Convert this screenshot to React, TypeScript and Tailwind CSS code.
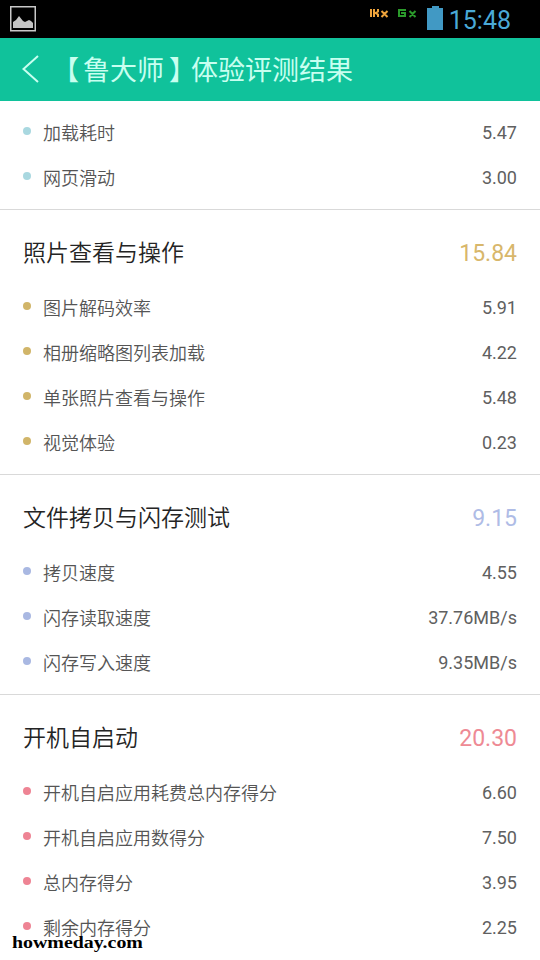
interface Item {
  label: string;
  value: string;
}

interface Section {
  title?: string;
  score?: string;
  dot: string;
  color: string;
  items: Item[];
}

const sections: Section[] = [
  {
    dot: "bg-[#a9d8e0]",
    color: "text-[#a9d8e0]",
    items: [
      { label: "加载耗时", value: "5.47" },
      { label: "网页滑动", value: "3.00" },
    ],
  },
  {
    title: "照片查看与操作",
    score: "15.84",
    dot: "bg-[#d1b569]",
    color: "text-[#d8b76b]",
    items: [
      { label: "图片解码效率", value: "5.91" },
      { label: "相册缩略图列表加载", value: "4.22" },
      { label: "单张照片查看与操作", value: "5.48" },
      { label: "视觉体验", value: "0.23" },
    ],
  },
  {
    title: "文件拷贝与闪存测试",
    score: "9.15",
    dot: "bg-[#a9b8e2]",
    color: "text-[#afbce6]",
    items: [
      { label: "拷贝速度", value: "4.55" },
      { label: "闪存读取速度", value: "37.76MB/s" },
      { label: "闪存写入速度", value: "9.35MB/s" },
    ],
  },
  {
    title: "开机自启动",
    score: "20.30",
    dot: "bg-[#ee8494]",
    color: "text-[#ee8a94]",
    items: [
      { label: "开机自启应用耗费总内存得分", value: "6.60" },
      { label: "开机自启应用数得分", value: "7.50" },
      { label: "总内存得分", value: "3.95" },
      { label: "剩余内存得分", value: "2.25" },
    ],
  },
];

const StatusBar = () => (
  <div className="flex h-[38px] shrink-0 items-start bg-black text-[#4aa9d6]">
    <svg className="mt-[6px] ml-[10px]" width="27" height="27" fill="none">
      <rect x="0.75" y="0.75" width="24.5" height="24" stroke="#c8c8c8" strokeWidth="1.5" />
      <path d="M3 22v-6l3-2 3-4 4 5 2 1 4-2 2 1 2 2v5z" fill="#c4c4c4" />
    </svg>
    <svg className="mt-[9px] ml-auto" width="50" height="9" fill="none" strokeWidth="2">
      <path d="M2 0v8M5 0v8M9 0v2.500L6.500 4L9 5.500V8M12.500 2l6 6M18.500 2l-6 6" stroke="#f0a53c" />
      <path d="M37 1h-7v6h6v-3h-4M40.500 2l6 6M46.500 2l-6 6" stroke="#2b9a2b" />
    </svg>
    <svg className="mt-[6px] ml-[8px]" width="16" height="24" fill="#4199c4">
      <path d="M5 0h7v2h4v22H0V2h5z" />
    </svg>
    <span className="mr-[29px] ml-[6px] text-[25px] leading-[41px]">15:48</span>
  </div>
);

const Header = () => (
  <div className="flex h-[63px] shrink-0 items-center bg-[#10c29b] text-[#c8fff0]">
    <svg className="mb-[2px] ml-[21px]" width="20" height="28" fill="none" stroke="currentColor" strokeWidth="2">
      <path d="M17 1L2.500 14L17 27" />
    </svg>
    <h1 className="mt-[3px] ml-[15px] text-[27px] leading-none whitespace-nowrap">
      <span className="mr-[4px] -ml-[4px]">【</span>鲁大师<span className="-mr-[5px] ml-[5px]">】</span>体验评测结果
    </h1>
  </div>
);

const ResultSection = ({ title, score, dot, color, items }: Section) => (
  <section className="border-b border-[#d9d9d9] pt-[10px] pb-[9px] first:pt-[9px] last:border-b-0">
    {title && (
      <div className="flex h-[65px] items-center justify-between pr-[23px] pl-[23px]">
        <h2 className="mt-px text-[23px] leading-none font-[350] text-[#242424]">{title}</h2>
        <span className={`mt-[2px] text-[23px] leading-none ${color}`}>{score}</span>
      </div>
    )}
    {items.map((item) => (
      <div key={item.label} className="flex h-[45px] items-center pr-[23px] pl-[23px]">
        <span className={`mb-[4px] size-[8px] rounded-full ${dot}`}></span>
        <span className="mt-[2px] ml-[12px] text-[18px] leading-none font-[350] text-[#555555]">
          {item.label}
        </span>
        <span className="ml-auto text-[18px] leading-none text-[#606060]">{item.value}</span>
      </div>
    ))}
  </section>
);

const App = () => {
  return (
    <div className="relative flex h-[960px] w-[540px] flex-col overflow-hidden bg-white font-[Roboto,'Noto_Sans_CJK_SC',sans-serif]">
      <StatusBar />
      <Header />
      <main className="min-h-0 flex-1 overflow-hidden">
        {sections.map((section, index) => (
          <ResultSection key={index} {...section} />
        ))}
      </main>
      <span className="absolute top-[933px] left-[12px] origin-left scale-x-[1.17] font-['Liberation_Serif',serif] text-[17px] leading-[20px] font-bold text-black">
        howmeday.com
      </span>
    </div>
  );
};

export default App;
